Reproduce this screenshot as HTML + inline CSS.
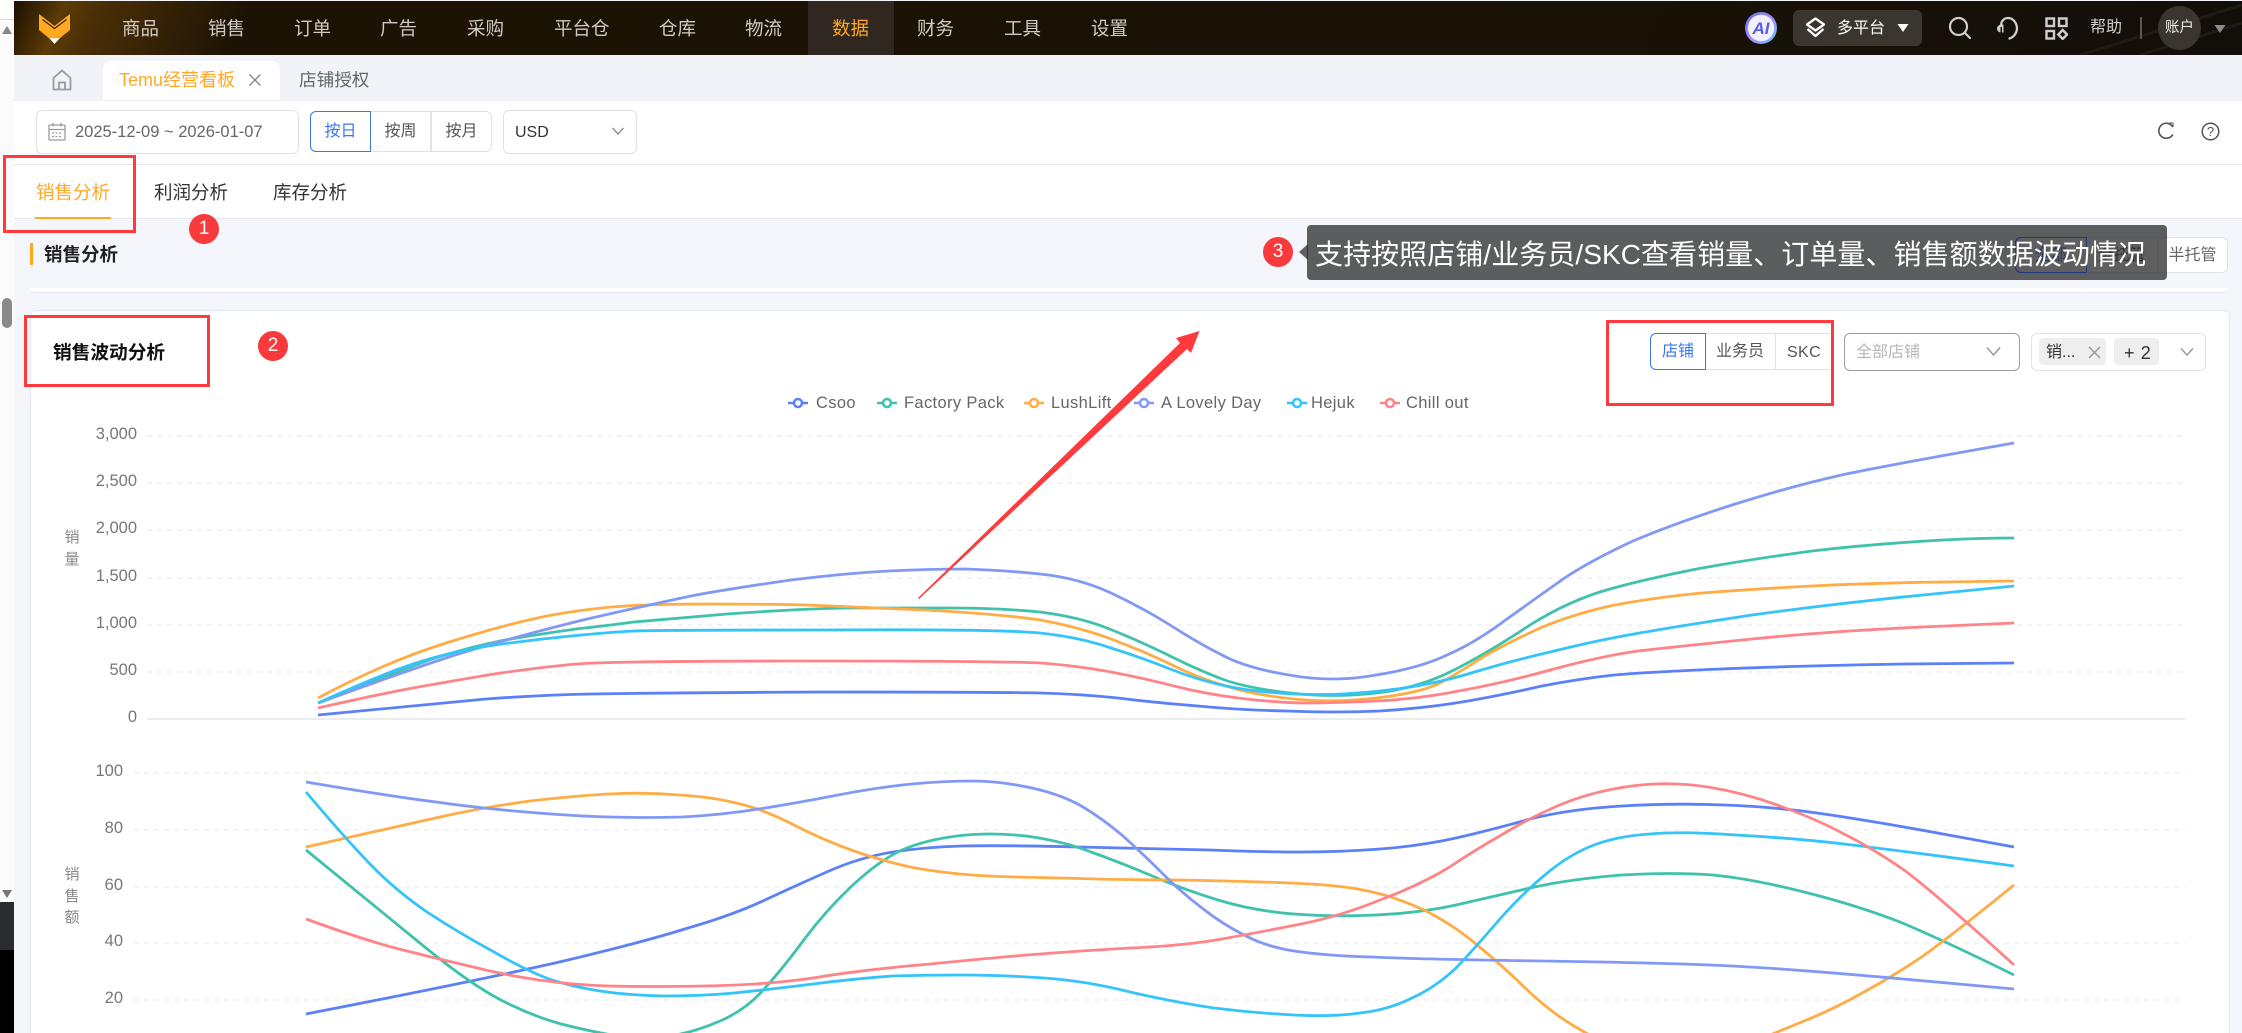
<!DOCTYPE html>
<html lang="zh">
<head>
<meta charset="utf-8">
<title>Temu经营看板</title>
<style>
html,body{margin:0;padding:0;width:2242px;height:1033px;overflow:hidden;background:#f5f6fb}
body{position:relative;font-family:"Liberation Sans","Noto Sans CJK SC",sans-serif;color:#333}
.a{position:absolute;box-sizing:border-box}
.t{position:absolute;white-space:nowrap}
.nav{top:8px;height:40px;line-height:41px;font-size:18.5px;color:#cfcbc4}
.box{position:absolute;box-sizing:border-box;border:3.5px solid #ff3a3c}
.badge{position:absolute;width:30px;height:30px;border-radius:50%;background:#f93a3d;color:#fff;font-size:19px;line-height:30px;text-align:center}
.seg{position:absolute;box-sizing:border-box;border:1.5px solid #e0e2e8;background:#fff;text-align:center;color:#555;font-size:16px}
.axis{position:absolute;text-align:right;font-size:16.5px;color:#777;line-height:20px;white-space:nowrap}
.vl{position:absolute;font-size:15px;color:#888;line-height:21.5px;width:20px;text-align:center}
.leg{position:absolute;top:393px;height:20px;line-height:20px;font-size:16.5px;letter-spacing:.35px;color:#666;white-space:nowrap}
</style>
</head>
<body>

<!-- left strip -->
<div class="a" style="left:0;top:0;width:14px;height:1033px;background:#fbfbfb"></div>
<div class="a" style="left:0;top:0;width:14px;height:20px;background:#fff;border-bottom:1px solid #ddd"></div>
<svg class="a" style="left:0;top:24px" width="14" height="12"><path d="M7 2L12 10H2z" fill="#888"/></svg>
<div class="a" style="left:2px;top:298px;width:10px;height:30px;border-radius:5px;background:#8a8a8a"></div>
<svg class="a" style="left:0;top:888px" width="14" height="12"><path d="M2 2H12L7 10z" fill="#777"/></svg>
<div class="a" style="left:0;top:902px;width:14px;height:48px;background:#2a2b2e"></div>
<div class="a" style="left:0;top:950px;width:14px;height:83px;background:#000"></div>

<!-- top bar -->
<div class="a" style="left:14px;top:1px;width:2228px;height:54px;background:linear-gradient(112deg,#1b1000 0,#5c3b08 48px,#4a2f06 80px,#1c1304 220px,#191206 1500px,#120e09 100%);overflow:hidden"></div>
<svg class="a" style="left:2020px;top:1px" width="222" height="54" fill="none" stroke="#fff" stroke-opacity=".05" stroke-width="3"><path d="M60 54L222 4M120 54L222 22"/></svg>
<svg class="a" style="left:36px;top:12px" width="38" height="34" viewBox="36 12 38 34">
  <path d="M39 14L54.500 26L70 14V30L59.500 38.500H49.500L39 30z" fill="#ffa820"/>
  <path d="M42.500 19.500L54.500 28.500L66.500 19.500" fill="none" stroke="#3a2506" stroke-width="1.200"/>
  <path d="M49.300 38.300H59.700L54.500 44z" fill="#fff"/>
</svg>
<div class="a" style="left:808px;top:1px;width:86px;height:54px;background:#302820"></div>
<div class="t nav" style="left:122px">商品</div>
<div class="t nav" style="left:208px">销售</div>
<div class="t nav" style="left:294px">订单</div>
<div class="t nav" style="left:380px">广告</div>
<div class="t nav" style="left:467px">采购</div>
<div class="t nav" style="left:554px">平台仓</div>
<div class="t nav" style="left:659px">仓库</div>
<div class="t nav" style="left:745px">物流</div>
<div class="t nav" style="left:832px;color:#ffa820">数据</div>
<div class="t nav" style="left:917px">财务</div>
<div class="t nav" style="left:1004px">工具</div>
<div class="t nav" style="left:1091px">设置</div>

<!-- top bar right -->
<svg class="a" style="left:1745px;top:12px" width="32" height="32" viewBox="0 0 32 32">
  <defs><linearGradient id="g" x1="0" y1="0" x2="1" y2="1"><stop offset="0" stop-color="#5a6cf5"/><stop offset=".5" stop-color="#a78bfa"/><stop offset="1" stop-color="#5cc8fa"/></linearGradient></defs>
  <circle cx="16" cy="16" r="16" fill="url(#g)"/>
  <circle cx="16" cy="16" r="13.200" fill="#f2f0ff"/>
  <text x="16" y="22" text-anchor="middle" font-family="Liberation Sans" font-weight="bold" font-style="italic" font-size="17" fill="#5560e8">AI</text>
</svg>
<div class="a" style="left:1793px;top:10px;width:129px;height:36px;border-radius:6px;background:#3a352e"></div>
<svg class="a" style="left:1805px;top:17px" width="21" height="21" viewBox="0 0 21 21" fill="none" stroke="#fff" stroke-width="2.300" stroke-linejoin="round">
  <path d="M10.500 1.500L19 7.500L10.500 13.500L2 7.500z"/><path d="M2.500 12L10.500 19L18.500 12"/>
</svg>
<div class="t" style="left:1837px;top:16px;font-size:16px;line-height:25px;color:#fff">多平台</div>
<svg class="a" style="left:1897px;top:23px" width="12" height="10"><path d="M0.500 1H11.500L6 9z" fill="#fff"/></svg>
<svg class="a" style="left:1948px;top:16px" width="24" height="24" viewBox="0 0 24 24" fill="none" stroke="#d0cfcd" stroke-width="2.200" stroke-linecap="round">
  <circle cx="10.500" cy="10.500" r="8.500"/><path d="M17 17L22 22"/>
</svg>
<svg class="a" style="left:1996px;top:16px" width="24" height="24" viewBox="0 0 24 24" fill="none" stroke="#d0cfcd" stroke-width="2.300" stroke-linecap="round">
  <path d="M5 10C5 4.500 8.500 2 12 2C16 2 20 5 21 11.500C21 17 18 21 13.500 22.500"/>
  <path d="M4.500 8.500C2 9.500 1 11 1 12.500C1 14 2 16 4.500 16.500z" fill="#d0cfcd" stroke="none"/>
  <path d="M6 8.500H7.500V16.500H6z" fill="#d0cfcd" stroke="none"/>
</svg>
<svg class="a" style="left:2045px;top:17px" width="23" height="23" viewBox="0 0 23 23" fill="none" stroke="#d0cfcd" stroke-width="2.400">
  <rect x="1.500" y="1.500" width="7.500" height="7.500"/><rect x="14" y="1.500" width="7.500" height="7.500"/><rect x="1.500" y="14" width="7.500" height="7.500"/><path d="M17.700 13L22 17.500L17.700 22L13.300 17.500z"/>
</svg>
<div class="t" style="left:2090px;top:16px;font-size:16px;line-height:24px;color:#d0cfcd">帮助</div>
<div class="a" style="left:2140px;top:17px;width:2px;height:22px;background:#5a5650"></div>
<div class="a" style="left:2158px;top:6px;width:43px;height:44px;border-radius:50%;background:#3a352e"></div>
<div class="t" style="left:2165px;top:17px;font-size:14.500px;line-height:23px;color:#eee">账户</div>
<svg class="a" style="left:2214px;top:24px" width="12" height="10"><path d="M0.500 1H11.500L6 9z" fill="#8f8c88"/></svg>

<!-- tab bar -->
<div class="a" style="left:14px;top:55px;width:2228px;height:45px;background:#f1f3f8"></div>
<svg class="a" style="left:52px;top:69px" width="20" height="22" viewBox="0 0 20 22" fill="none" stroke="#9a9ca3" stroke-width="1.800">
  <path d="M1.500 9L10 1.500L18.500 9V20.500H1.500z"/><path d="M7 20.500V13.500H13V20.500"/>
</svg>
<div class="a" style="left:103px;top:61px;width:177px;height:40px;background:#fff;border-radius:8px 8px 0 0"></div>
<div class="t" style="left:119px;top:67px;font-size:18px;line-height:26px;color:#ffa828">Temu经营看板</div>
<svg class="a" style="left:248px;top:73px" width="14" height="14" fill="none" stroke="#8a8d92" stroke-width="1.500"><path d="M1.500 1.500L12.500 12.500M12.500 1.500L1.500 12.500"/></svg>
<div class="t" style="left:299px;top:67px;font-size:17.600px;line-height:26px;color:#666">店铺授权</div>

<!-- toolbar -->
<div class="a" style="left:14px;top:100px;width:2228px;height:65px;background:#fff;border-top:1px solid #eceef3;border-bottom:1.500px solid #e6e8ef"></div>
<div class="a" style="left:36px;top:110px;width:263px;height:44px;border:1.500px solid #dfe1e6;border-radius:6px;background:#fff"></div>
<svg class="a" style="left:48px;top:122px" width="18" height="19" viewBox="0 0 18 19" fill="none" stroke="#9a9a9a" stroke-width="1.300">
  <rect x="1" y="3" width="16" height="15" rx="1"/><path d="M1 7.500H17M5 1V4.500M13 1V4.500"/><path d="M4 11H14M4 14.500H14" stroke-dasharray="2 1.500"/>
</svg>
<div class="t" style="left:75px;top:120px;font-size:16.500px;line-height:24px;color:#666">2025-12-09 ~ 2026-01-07</div>
<div class="seg" style="left:371px;top:111px;width:60px;height:41px;line-height:40px;border-left:0">按周</div>
<div class="seg" style="left:431px;top:111px;width:61px;height:41px;line-height:40px;border-left:1.500px solid #e0e2e8;border-radius:0 6px 6px 0">按月</div>
<div class="seg" style="left:310px;top:111px;width:61px;height:41px;line-height:40px;border-color:#3a76f0;color:#3a76f0;border-radius:6px 0 0 6px">按日</div>
<div class="a" style="left:503px;top:110px;width:134px;height:44px;border:1.500px solid #dfe1e6;border-radius:6px;background:#fff"></div>
<div class="t" style="left:515px;top:121px;font-size:16px;line-height:24px;color:#333">USD</div>
<svg class="a" style="left:611px;top:126px" width="14" height="10" fill="none" stroke="#8c8c8c" stroke-width="1.400"><path d="M1.500 2L7 8L12.500 2"/></svg>
<svg class="a" style="left:2157px;top:120px" width="20" height="22" viewBox="0 0 20 22" fill="none" stroke="#555" stroke-width="1.600" stroke-linecap="round"><path d="M15.500 6.500A7.500 7.500 0 1 0 15.500 15"/><path d="M12.500 3L16 3L16 6.500" stroke-width="1"/></svg>
<svg class="a" style="left:2201px;top:122px" width="19" height="19" viewBox="0 0 19 19" fill="none" stroke="#555" stroke-width="1.500"><circle cx="9.500" cy="9.500" r="8.300"/></svg>
<div class="t" style="left:2201px;top:122px;width:19px;text-align:center;font-size:13px;line-height:19px;color:#555">?</div>

<!-- sub tabs -->
<div class="a" style="left:14px;top:165px;width:2228px;height:54px;background:#fff;border-bottom:1.500px solid #e6e8ef"></div>
<div class="t" style="left:36px;top:179px;font-size:18.500px;line-height:28px;color:#ffa828">销售分析</div>
<div class="a" style="left:35px;top:216.500px;width:76px;height:2px;background:#ffa820"></div>
<div class="t" style="left:154px;top:179px;font-size:18.500px;line-height:28px;color:#333">利润分析</div>
<div class="t" style="left:273px;top:179px;font-size:18.500px;line-height:28px;color:#333">库存分析</div>

<!-- section header -->
<div class="a" style="left:30px;top:243px;width:3px;height:22px;background:#ffa820"></div>
<div class="t" style="left:44px;top:241px;font-size:18.500px;line-height:28px;font-weight:bold;color:#222">销售分析</div>
<div class="a" style="left:30px;top:288px;width:2199px;height:5px;background:#fff;border-bottom:1.500px solid #e6e8ef;border-radius:0 0 6px 6px"></div>

<!-- section buttons behind tooltip -->
<div class="seg" style="left:2086px;top:237px;width:72px;height:36px;line-height:35px;border-left:0">全托管</div>
<div class="seg" style="left:2157px;top:237px;width:71px;height:36px;line-height:35px;border-radius:0 6px 6px 0;color:#666">半托管</div>
<div class="seg" style="left:2015px;top:237px;width:71.500px;height:36px;line-height:35px;border-color:#3a76f0;border-radius:6px 0 0 6px;color:#3a76f0">全部</div>

<!-- chart card -->
<div class="a" style="left:30px;top:310px;width:2200px;height:730px;background:#fff;border:1.500px solid #e6e8ef;border-radius:6px"></div>
<div class="t" style="left:53px;top:339px;font-size:18.700px;line-height:28px;font-weight:bold;color:#111">销售波动分析</div>

<!-- dimension buttons -->
<div class="seg" style="left:1705px;top:333px;width:71px;height:37px;line-height:36px;border-left:0">业务员</div>
<div class="seg" style="left:1775px;top:333px;width:55px;height:37px;line-height:37px;border-right:0;color:#555;letter-spacing:.4px;padding-left:2px">SKC</div>
<div class="seg" style="left:1650px;top:333px;width:56px;height:37px;line-height:36px;border-color:#3a76f0;color:#3a76f0;border-radius:6px 0 0 6px">店铺</div>
<div class="a" style="left:1844px;top:333px;width:176px;height:38px;border:1.500px solid #9c9c9c;border-radius:6px;background:#fff"></div>
<div class="t" style="left:1856px;top:341px;font-size:16px;line-height:24px;color:#b4b7bb">全部店铺</div>
<svg class="a" style="left:1986px;top:346px" width="15" height="11" fill="none" stroke="#999" stroke-width="1.500"><path d="M1 1.500L7.500 9L14 1.500"/></svg>
<div class="a" style="left:2031px;top:333px;width:175px;height:38px;border:1.500px solid #e0e2e6;border-radius:6px;background:#fff"></div>
<div class="a" style="left:2039px;top:338px;width:67px;height:27px;background:#eee;border-radius:4px"></div>
<div class="t" style="left:2046px;top:341px;font-size:16px;line-height:24px;color:#333">销...</div>
<svg class="a" style="left:2088px;top:346px" width="13" height="13" fill="none" stroke="#999" stroke-width="1.500"><path d="M1 1L12 12M12 1L1 12"/></svg>
<div class="a" style="left:2114px;top:338px;width:45px;height:27px;background:#eee;border-radius:4px"></div>
<div class="t" style="left:2124px;top:341px;font-size:18px;letter-spacing:.6px;line-height:24px;color:#333">+ 2</div>
<svg class="a" style="left:2180px;top:347px" width="14" height="10" fill="none" stroke="#999" stroke-width="1.400"><path d="M1 1.500L7 8L13 1.500"/></svg>

<!-- legend -->
<svg class="a" style="left:780px;top:392px" width="640" height="22" viewBox="780 392 640 22" fill="#fff" stroke-width="2.500">
  <g stroke="#5b80f7"><path d="M788 403H808" fill="none"/><circle cx="798" cy="403" r="4"/></g>
  <g stroke="#3fc2ab"><path d="M877 403H897" fill="none"/><circle cx="887" cy="403" r="4"/></g>
</svg>
<svg class="a" style="left:1020px;top:392px" width="460" height="22" viewBox="1020 392 460 22" fill="#fff" stroke-width="2.500">
  <g stroke="#ffac45"><path d="M1024 403H1044" fill="none"/><circle cx="1034" cy="403" r="4"/></g>
  <g stroke="#8199f5"><path d="M1134 403H1154" fill="none"/><circle cx="1144" cy="403" r="4"/></g>
  <g stroke="#34c4fa"><path d="M1287 403H1307" fill="none"/><circle cx="1297" cy="403" r="4"/></g>
  <g stroke="#ff8488"><path d="M1380 403H1400" fill="none"/><circle cx="1390" cy="403" r="4"/></g>
</svg>
<div class="leg" style="left:816px">Csoo</div>
<div class="leg" style="left:904px">Factory Pack</div>
<div class="leg" style="left:1051px">LushLift</div>
<div class="leg" style="left:1161px">A Lovely Day</div>
<div class="leg" style="left:1311px">Hejuk</div>
<div class="leg" style="left:1406px">Chill out</div>

<!-- axis labels -->
<div class="axis" style="right:2105px;top:424px">3,000</div>
<div class="axis" style="right:2105px;top:471px">2,500</div>
<div class="axis" style="right:2105px;top:518px">2,000</div>
<div class="axis" style="right:2105px;top:566px">1,500</div>
<div class="axis" style="right:2105px;top:613px">1,000</div>
<div class="axis" style="right:2105px;top:660px">500</div>
<div class="axis" style="right:2105px;top:707px">0</div>
<div class="vl" style="left:62px;top:527px">销<br>量</div>
<div class="axis" style="right:2119px;top:761px">100</div>
<div class="axis" style="right:2119px;top:818px">80</div>
<div class="axis" style="right:2119px;top:875px">60</div>
<div class="axis" style="right:2119px;top:931px">40</div>
<div class="axis" style="right:2119px;top:988px">20</div>
<div class="vl" style="left:62px;top:864px">销<br>售<br>额</div>

<!-- charts -->
<svg class="a" style="left:0;top:0" width="2242" height="1033" viewBox="0 0 2242 1033" fill="none">
  <g stroke="#eef0f3" stroke-width="1.500" stroke-dasharray="5 5">
    <path d="M147 436H2185M147 483H2185M147 530H2185M147 578H2185M147 625H2185M147 672H2185"/>
    <path d="M134 773H2185M134 830H2185M134 887H2185M134 943H2185M134 1000H2185"/>
  </g>
  <path d="M147 719H2185" stroke="#e3e5e9" stroke-width="1.500"/>

  <g stroke-width="2.800" stroke-linecap="butt">
    <!-- chart 1 -->
    <path stroke="#5b80f7" d="M318 715Q430 704 486 699Q542 695 590 694Q638 693 819 692Q1000 692 1040 693Q1079 694 1118 698Q1158 703 1198 706Q1238 710 1286 711Q1333 713 1380 711Q1428 708 1468 701Q1507 694 1542 686Q1578 679 1614 675Q1650 672 1721 669Q1792 666 1903 664L2014 663"/>
    <path stroke="#3fc2ab" d="M318 703Q400 670 435 658Q470 647 505 640Q540 634 576 629Q612 625 634 622Q657 620 727 614Q797 609 845 608Q893 608 946 608Q1000 608 1040 612Q1079 617 1107 628Q1135 639 1166 654Q1198 670 1222 679Q1246 688 1290 693Q1333 698 1376 693Q1420 688 1456 669Q1491 651 1530 625Q1570 600 1610 589Q1650 578 1702 568Q1753 559 1812 551Q1872 544 1943 540Q1980 538 2014 538"/>
    <path stroke="#ffac45" d="M318 698Q383 663 446 643Q510 623 552 615Q593 608 625 606Q657 604 711 604Q765 604 806 605Q848 607 924 610Q1000 614 1040 620Q1079 627 1111 639Q1143 651 1170 664Q1198 678 1226 686Q1254 695 1294 699Q1333 703 1376 698Q1420 693 1440 683Q1460 672 1483 657Q1507 643 1538 629Q1570 615 1610 606Q1650 598 1702 593Q1753 589 1812 586Q1872 583 1943 582L2014 581"/>
    <path stroke="#8199f5" d="M318 703Q400 673 455 655Q510 638 583 620Q657 603 696 595Q735 588 791 580Q848 573 889 571Q930 569 965 569Q1000 570 1040 574Q1079 578 1111 593Q1143 608 1170 625Q1198 643 1222 655Q1246 668 1289 675Q1333 683 1376 675Q1420 668 1447 655Q1475 643 1507 619Q1539 596 1566 577Q1594 559 1633 541Q1673 524 1732 505Q1792 486 1846 474Q1900 463 2014 443"/>
    <path stroke="#34c4fa" d="M318 703Q380 675 413 664Q446 653 488 646Q530 640 571 636Q612 632 634 631Q657 630 828 630Q1000 629 1040 633Q1079 637 1111 648Q1143 658 1170 669Q1198 680 1226 686Q1254 692 1294 694Q1333 696 1380 691Q1428 686 1468 674Q1507 662 1550 652Q1594 641 1634 634Q1673 627 1752 615Q1832 604 1923 595L2014 586"/>
    <path stroke="#ff8488" d="M318 708Q380 694 413 688Q446 682 494 674Q542 667 577 664Q612 661 806 661Q1000 661 1040 663Q1079 666 1111 672Q1143 678 1174 686Q1206 694 1238 698Q1269 702 1301 703Q1333 703 1376 701Q1420 699 1464 690Q1507 682 1554 669Q1602 656 1638 651Q1673 647 1752 639Q1832 631 1923 627L2014 623"/>
    <!-- chart 2 -->
    <path stroke="#5b80f7" d="M306 1014Q466 983 555 963Q644 942 688 928Q733 915 765 900Q797 885 829 871Q861 857 893 852Q925 847 962 846Q1000 845 1079 847Q1158 849 1210 850Q1261 852 1301 852Q1341 852 1380 849Q1420 846 1456 838Q1491 830 1530 819Q1570 809 1622 806Q1673 803 1725 805Q1777 807 1824 814Q1872 821 1943 834L2014 847"/>
    <path stroke="#3fc2ab" d="M306 850Q383 913 426 948Q469 983 499 999Q529 1015 561 1024Q593 1032 618 1036Q644 1040 670 1036Q695 1032 720 1021Q746 1010 765 988Q784 967 806 937Q829 907 854 884Q880 860 902 850Q925 840 957 836Q989 832 1026 836Q1063 841 1091 852Q1119 862 1150 875Q1182 889 1218 900Q1254 911 1294 914Q1333 917 1376 915Q1420 913 1456 905Q1491 897 1530 888Q1570 879 1622 875Q1673 872 1713 875Q1753 879 1804 892Q1856 905 1900 922Q1943 940 2014 975"/>
    <path stroke="#ffac45" d="M306 847Q395 827 440 817Q485 807 530 801Q574 796 609 794Q644 792 679 795Q714 797 740 804Q765 810 794 825Q823 840 854 851Q886 862 915 868Q944 873 972 875Q1000 877 1060 878Q1119 880 1178 880Q1238 881 1290 883Q1341 885 1368 891Q1396 897 1424 910Q1452 924 1476 944Q1499 963 1519 982Q1539 1002 1560 1017Q1582 1032 1604 1042Q1626 1053 1650 1057Q1673 1061 1701 1057Q1729 1053 1753 1042Q1777 1032 1804 1021Q1832 1010 1864 992Q1895 975 1923 956Q1951 936 2014 885"/>
    <path stroke="#8199f5" d="M306 782Q395 797 436 802Q478 808 526 812Q574 816 609 817Q644 818 682 817Q721 815 759 809Q797 803 838 795Q880 787 912 784Q944 781 972 781Q1000 781 1032 788Q1063 795 1083 807Q1103 819 1123 836Q1143 854 1162 873Q1182 893 1202 908Q1222 924 1246 936Q1269 948 1301 952Q1333 956 1372 957Q1412 959 1542 961Q1673 963 1732 966Q1792 969 1903 979L2014 989"/>
    <path stroke="#34c4fa" d="M306 792Q344 837 370 864Q395 890 427 912Q459 933 494 952Q529 972 552 980Q574 987 600 991Q625 995 664 996Q702 996 734 993Q765 990 813 984Q861 978 893 976Q925 975 962 975Q1000 975 1044 978Q1087 981 1130 992Q1174 1002 1214 1008Q1254 1013 1294 1015Q1333 1017 1360 1013Q1388 1010 1412 998Q1436 987 1456 968Q1475 948 1499 920Q1523 893 1546 874Q1570 854 1594 845Q1618 836 1650 834Q1681 831 1736 835Q1792 838 1844 844Q1895 850 2014 866"/>
    <path stroke="#ff8488" d="M306 919Q364 940 399 949Q434 958 469 966Q504 975 539 980Q574 985 609 986Q644 987 704 986Q765 985 813 978Q861 970 930 964Q1000 957 1040 954Q1079 951 1130 948Q1182 946 1222 939Q1261 932 1301 924Q1341 916 1380 900Q1420 885 1448 868Q1475 850 1503 834Q1531 817 1562 804Q1594 791 1632 786Q1670 781 1708 787Q1745 793 1780 806Q1816 819 1844 834Q1872 848 1904 870Q1935 893 2014 965"/>
  </g>
  <!-- annotation arrow -->
  <polygon points="918,598 1180,343 1176,338 1199.500,331 1191,353 1187,349 919,599" fill="#ff3a3c"/>
</svg>

<!-- annotations -->
<div class="box" style="left:3px;top:155px;width:133px;height:78px"></div>
<div class="badge" style="left:189px;top:214px">1</div>
<div class="box" style="left:24px;top:315px;width:186px;height:72px"></div>
<div class="badge" style="left:258px;top:331px">2</div>
<div class="box" style="left:1606px;top:320px;width:228px;height:86px"></div>
<div class="badge" style="left:1263px;top:237px">3</div>
<svg class="a" style="left:1299px;top:244px" width="9" height="16"><path d="M9 0V16L0 8z" fill="#5f6062"/></svg>
<div class="a" style="left:1307px;top:225px;width:860px;height:55px;border-radius:4px;background:rgba(33,33,35,.72)"></div>
<div class="a" style="left:2015px;top:237px;width:71.500px;height:36px;border:1.500px solid #1e3a78;border-radius:6px 0 0 6px"></div>
<div class="t" style="left:1315px;top:232px;font-size:28px;letter-spacing:.06px;line-height:45px;color:#fff">支持按照店铺/业务员/SKC查看销量、订单量、销售额数据波动情况</div>

</body>
</html>
